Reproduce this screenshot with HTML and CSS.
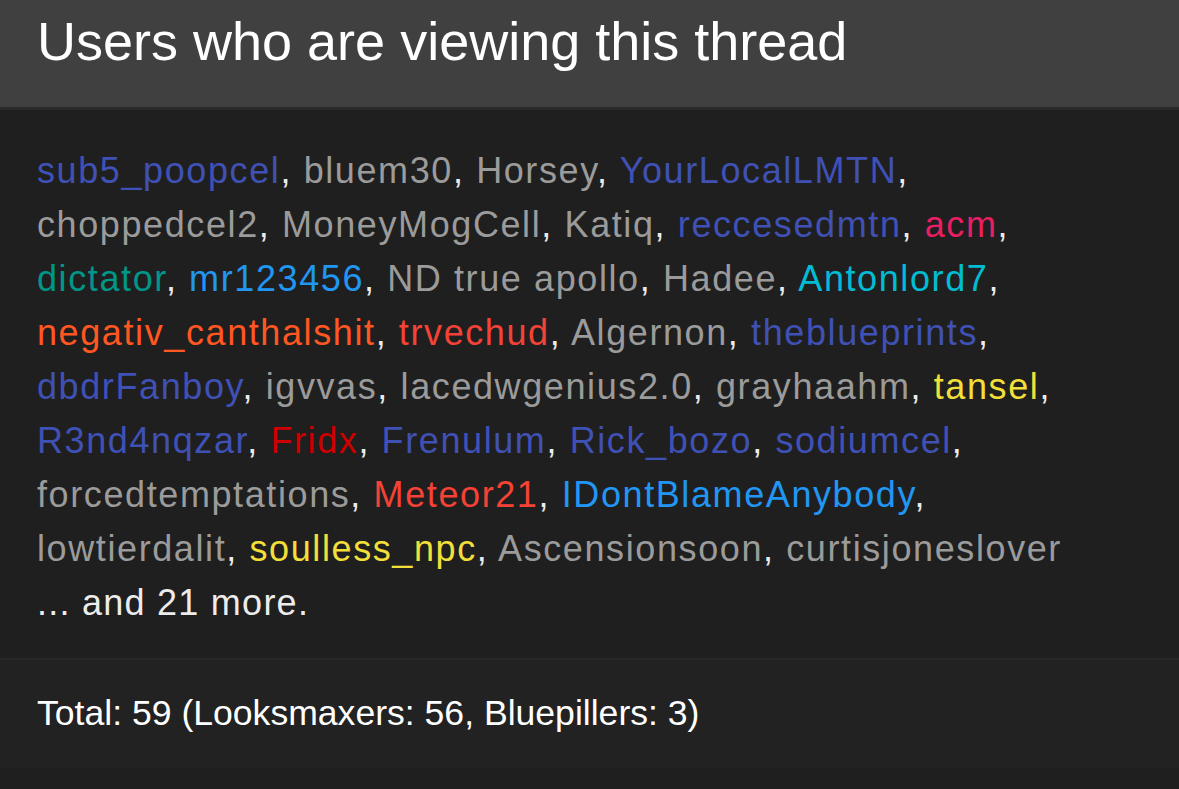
FILE: index.html
```html
<!DOCTYPE html>
<html lang="en">
<head>
  <meta charset="UTF-8">
  <title>Users who are viewing this thread</title>
  <link rel="stylesheet" href="styles.css">
</head>
<body>
  <div class="block">
    <h3 class="block-header">Users who are viewing this thread</h3>
    <div class="block-body">
      <p class="user-list">
        <span class="u-indigo">sub5_poopcel</span>, <span class="u-gray">bluem30</span>, <span class="u-gray">Horsey</span>, <span class="u-indigo">YourLocalLMTN</span>,
        <span class="u-gray">choppedcel2</span>, <span class="u-gray">MoneyMogCell</span>, <span class="u-gray">Katiq</span>, <span class="u-indigo">reccesedmtn</span>, <span class="u-pink">acm</span>,
        <span class="u-teal">dictator</span>, <span class="u-blue">mr123456</span>, <span class="u-gray">ND true apollo</span>, <span class="u-gray">Hadee</span>, <span class="u-cyan">Antonlord7</span>,
        <span class="u-orange">negativ_canthalshit</span>, <span class="u-red">trvechud</span>, <span class="u-gray">Algernon</span>, <span class="u-indigo">theblueprints</span>,
        <span class="u-indigo">dbdrFanboy</span>, <span class="u-gray">igvvas</span>, <span class="u-gray">lacedwgenius2.0</span>, <span class="u-gray">grayhaahm</span>, <span class="u-yellow">tansel</span>,
        <span class="u-indigo">R3nd4nqzar</span>, <span class="u-darkred">Fridx</span>, <span class="u-indigo">Frenulum</span>, <span class="u-indigo">Rick_bozo</span>, <span class="u-indigo">sodiumcel</span>,
        <span class="u-gray">forcedtemptations</span>, <span class="u-red">Meteor21</span>, <span class="u-blue">IDontBlameAnybody</span>,
        <span class="u-gray">lowtierdalit</span>, <span class="u-yellow">soulless_npc</span>, <span class="u-gray">Ascensionsoon</span>, <span class="u-gray">curtisjoneslover</span>
      </p>
      <p class="user-more">... and 21 more.</p>
    </div>
    <div class="block-footer">Total: 59 (Looksmaxers: 56, Bluepillers: 3)</div>
  </div>
</body>
</html>
```

FILE: styles.css
```css
body {
  margin: 0;
  background-color: #1f1f1f;
  font-family: 'Liberation Sans', Arial, sans-serif;
  color: #ececec;
}
.block {
  width: 100%;
}
.block-header {
  margin: 0;
  padding: 9px 37px 33px;
  background-color: #404040;
  border-bottom: 3px solid #2a2a2a;
  font-size: 54px;
  font-weight: normal;
  line-height: 1.2;
  color: #ffffff;
}
.block-body {
  padding: 34px 80px 28px 37px;
  background-color: #1f1f1f;
}
.user-list,
.user-more {
  margin: 0;
  font-size: 36px;
  line-height: 54px;
  letter-spacing: 1.6px;
}
.user-more {
  letter-spacing: 1.25px;
}
.block-footer {
  padding: 33px 37px 35px;
  background-color: #222222;
  border-top: 2px solid #282828;
  font-size: 35.6px;
  line-height: 40px;
  color: #ffffff;
}
.u-gray { color: #9b9b9b; }
.u-indigo { color: #3f51b5; }
.u-pink { color: #e91e63; }
.u-teal { color: #009688; }
.u-blue { color: #2196f3; }
.u-cyan { color: #00bcd4; }
.u-orange { color: #ff5722; }
.u-red { color: #f44336; }
.u-darkred { color: #cc0000; }
.u-yellow { color: #f2df3a; }
```
